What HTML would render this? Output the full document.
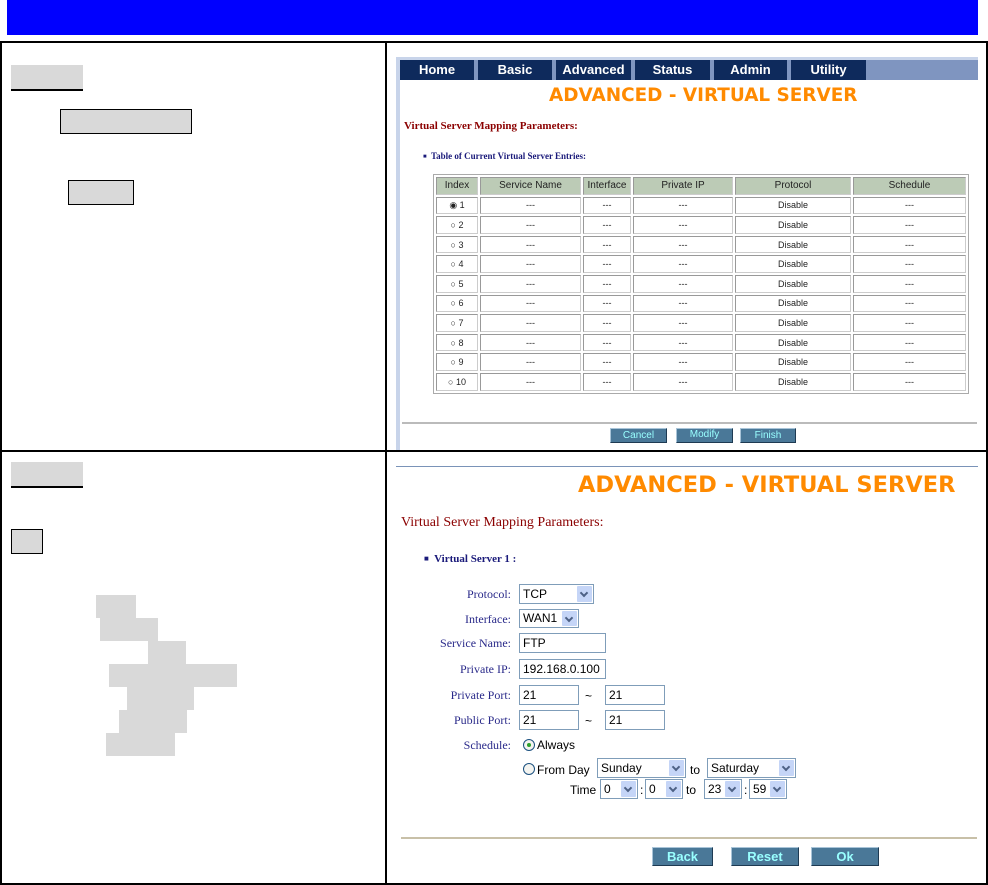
<!DOCTYPE html>
<html><head><meta charset="utf-8">
<style>
*{margin:0;padding:0;box-sizing:border-box}
body{width:988px;height:885px;background:#fff;position:relative;overflow:hidden;font-family:"Liberation Sans",sans-serif}
.a{position:absolute}
.g{position:absolute;background:#d9d9d9}
.gb{position:absolute;background:#d9d9d9;border:1px solid #000}
.nav{position:absolute;top:60px;height:20px;background:#0e2a5c;color:#fff;font:bold 13px "Liberation Sans Narrow","Liberation Sans",sans-serif;text-align:center;line-height:20px}
.ttl{position:absolute;color:#ff8a00;font-weight:bold;font-family:"DejaVu Sans",sans-serif;white-space:nowrap}
.red{position:absolute;color:#8b0000;font-family:"Liberation Serif",serif;white-space:nowrap}
.blu{position:absolute;color:#1a1a7a;font-family:"Liberation Serif",serif;font-weight:bold;white-space:nowrap}
table.t{position:absolute;left:433px;top:174px;width:536px;border-collapse:separate;border-spacing:2px;border:1px solid #aaa;font-size:9px;color:#222}
table.t td{border:1px solid #999;border-right-color:#ccc;border-bottom-color:#ccc;height:17.6px;text-align:center;padding:0}
table.t tr.h td{background:#bccbb6;font-size:10px;color:#222}
.btn{position:absolute;background:#4a7898;color:#9ff;border:1px solid #1e3a52;border-top-color:#a9c4d8;border-left-color:#a9c4d8;text-align:center;font-family:"Liberation Sans Narrow","Liberation Sans",sans-serif}
.lbl{position:absolute;width:120px;text-align:right;left:391px;color:#2a2a8a;font:12px "Liberation Serif",serif}
.in{position:absolute;border:1px solid #7f9db9;background:#fff;font-size:12px;padding-left:3px;color:#000}
.sel{position:absolute;border:1px solid #7f9db9;background:#fff;font-size:12px;padding-left:3px;color:#000}
.sel i{position:absolute;right:1px;top:1px;bottom:1px;width:15px;background:#c5d5f7;border-radius:1px}
.sel i:after{content:"";position:absolute;left:4px;top:4px;width:4px;height:4px;border-right:2px solid #4d6185;border-bottom:2px solid #4d6185;transform:rotate(45deg)}
.rad{position:absolute;width:12px;height:12px;border:1px solid #1c5180;border-radius:50%;background:#f4f4f0}
.tx{position:absolute;font-size:12px;color:#000;white-space:nowrap}
</style></head><body>
<div class="a" style="left:7px;top:0;width:971px;height:35px;background:#0000ff"></div>
<div class="a" style="left:0;top:41px;width:988px;height:2px;background:#000"></div>
<div class="a" style="left:0;top:450px;width:988px;height:2px;background:#000"></div>
<div class="a" style="left:0;top:883px;width:988px;height:2px;background:#000"></div>
<div class="a" style="left:0;top:41px;width:2px;height:844px;background:#000"></div>
<div class="a" style="left:986px;top:41px;width:2px;height:844px;background:#000"></div>
<div class="a" style="left:385px;top:41px;width:2px;height:844px;background:#000"></div>

<div class="g" style="left:11px;top:65px;width:72px;height:24px"></div>
<div class="a" style="left:11px;top:89px;width:72px;height:2px;background:#000"></div>
<div class="gb" style="left:60px;top:109px;width:132px;height:25px"></div>
<div class="gb" style="left:68px;top:180px;width:66px;height:25px"></div>
<div class="g" style="left:11px;top:462px;width:72px;height:24px"></div>
<div class="a" style="left:11px;top:486px;width:72px;height:2px;background:#000"></div>
<div class="gb" style="left:11px;top:529px;width:32px;height:25px"></div>
<div class="g" style="left:96px;top:595px;width:40px;height:23px"></div>
<div class="g" style="left:100px;top:618px;width:58px;height:23px"></div>
<div class="g" style="left:148px;top:641px;width:38px;height:23px"></div>
<div class="g" style="left:109px;top:664px;width:128px;height:23px"></div>
<div class="g" style="left:127px;top:687px;width:67px;height:23px"></div>
<div class="g" style="left:119px;top:710px;width:68px;height:23px"></div>
<div class="g" style="left:106px;top:733px;width:69px;height:23px"></div>

<div class="a" style="left:396px;top:57px;width:582px;height:393px;background:#fff"></div>
<div class="a" style="left:396px;top:57px;width:4px;height:393px;background:#c8d4ea"></div>
<div class="a" style="left:396px;top:57px;width:582px;height:3px;background:#c8d4ea"></div>
<div class="a" style="left:400px;top:60px;width:578px;height:20px;background:#7f95c0"></div>
<div class="nav" style="left:400px;width:74px">Home</div>
<div class="nav" style="left:478px;width:74px">Basic</div>
<div class="nav" style="left:556px;width:75px">Advanced</div>
<div class="nav" style="left:635px;width:75px">Status</div>
<div class="nav" style="left:714px;width:73px">Admin</div>
<div class="nav" style="left:791px;width:75px">Utility</div>
<div class="ttl" style="left:549px;top:85px;font-size:18.4px">ADVANCED - VIRTUAL SERVER</div>
<div class="red" style="left:404px;top:120px;font-size:11px;font-weight:bold">Virtual Server Mapping Parameters:</div>
<div class="blu" style="left:423px;top:151px;font-size:9px"><span style="font-size:6px;vertical-align:1px">■</span>&nbsp; Table of Current Virtual Server Entries:</div>
<table class="t">
<tr class="h"><td style="width:42px">Index</td><td style="width:101px">Service Name</td><td style="width:48px">Interface</td><td style="width:100px">Private IP</td><td style="width:116px">Protocol</td><td>Schedule</td></tr>
<tr><td>◉ 1</td><td>---</td><td>---</td><td>---</td><td>Disable</td><td>---</td></tr>
<tr><td>○ 2</td><td>---</td><td>---</td><td>---</td><td>Disable</td><td>---</td></tr>
<tr><td>○ 3</td><td>---</td><td>---</td><td>---</td><td>Disable</td><td>---</td></tr>
<tr><td>○ 4</td><td>---</td><td>---</td><td>---</td><td>Disable</td><td>---</td></tr>
<tr><td>○ 5</td><td>---</td><td>---</td><td>---</td><td>Disable</td><td>---</td></tr>
<tr><td>○ 6</td><td>---</td><td>---</td><td>---</td><td>Disable</td><td>---</td></tr>
<tr><td>○ 7</td><td>---</td><td>---</td><td>---</td><td>Disable</td><td>---</td></tr>
<tr><td>○ 8</td><td>---</td><td>---</td><td>---</td><td>Disable</td><td>---</td></tr>
<tr><td>○ 9</td><td>---</td><td>---</td><td>---</td><td>Disable</td><td>---</td></tr>
<tr><td>○ 10</td><td>---</td><td>---</td><td>---</td><td>Disable</td><td>---</td></tr>
</table>
<div class="a" style="left:402px;top:422px;width:575px;height:2px;background:#bbb"></div>
<div class="btn" style="left:610px;top:428px;width:57px;height:15px;font-size:10px;line-height:14px">Cancel</div>
<div class="btn" style="left:676px;top:428px;width:57px;height:15px;font-size:10px;line-height:12px">Modify</div>
<div class="btn" style="left:740px;top:428px;width:56px;height:15px;font-size:10px;line-height:14px">Finish</div>

<div class="a" style="left:396px;top:466px;width:582px;height:1px;background:#7a93b8"></div>
<div class="ttl" style="left:578px;top:472px;font-size:22.5px">ADVANCED - VIRTUAL SERVER</div>
<div class="red" style="left:401px;top:515px;font-size:14px">Virtual Server Mapping Parameters:</div>
<div class="blu" style="left:424px;top:553px;font-size:11px"><span style="font-size:8px;vertical-align:1px">■</span>&nbsp; Virtual Server 1 :</div>

<div class="lbl" style="top:587px">Protocol:</div>
<div class="sel" style="left:519px;top:584px;width:75px;height:20px;line-height:18px">TCP<i></i></div>
<div class="lbl" style="top:612px">Interface:</div>
<div class="sel" style="left:519px;top:609px;width:60px;height:19px;line-height:17px">WAN1<i></i></div>
<div class="lbl" style="top:636px">Service Name:</div>
<div class="in" style="left:519px;top:633px;width:87px;height:20px;line-height:18px">FTP</div>
<div class="lbl" style="top:662px">Private IP:</div>
<div class="in" style="left:519px;top:659px;width:87px;height:20px;line-height:18px">192.168.0.100</div>
<div class="lbl" style="top:688px">Private Port:</div>
<div class="in" style="left:519px;top:685px;width:60px;height:20px;line-height:18px">21</div>
<div class="tx" style="left:585px;top:689px">~</div>
<div class="in" style="left:605px;top:685px;width:60px;height:20px;line-height:18px">21</div>
<div class="lbl" style="top:713px">Public Port:</div>
<div class="in" style="left:519px;top:710px;width:60px;height:20px;line-height:18px">21</div>
<div class="tx" style="left:585px;top:714px">~</div>
<div class="in" style="left:605px;top:710px;width:60px;height:20px;line-height:18px">21</div>
<div class="lbl" style="top:738px">Schedule:</div>
<div class="rad" style="left:523px;top:739px"><div style="position:absolute;left:3px;top:3px;width:4px;height:4px;border-radius:50%;background:#2da02d"></div></div>
<div class="tx" style="left:537px;top:738px">Always</div>
<div class="rad" style="left:523px;top:763px"></div>
<div class="tx" style="left:537px;top:763px">From Day</div>
<div class="sel" style="left:597px;top:758px;width:89px;height:20px;line-height:18px">Sunday<i></i></div>
<div class="tx" style="left:690px;top:763px">to</div>
<div class="sel" style="left:707px;top:758px;width:89px;height:20px;line-height:18px">Saturday<i></i></div>
<div class="tx" style="left:570px;top:783px">Time</div>
<div class="sel" style="left:600px;top:779px;width:38px;height:20px;line-height:18px">0<i></i></div>
<div class="tx" style="left:640px;top:783px">:</div>
<div class="sel" style="left:645px;top:779px;width:38px;height:20px;line-height:18px">0<i></i></div>
<div class="tx" style="left:686px;top:783px">to</div>
<div class="sel" style="left:704px;top:779px;width:38px;height:20px;line-height:18px">23<i></i></div>
<div class="tx" style="left:744px;top:783px">:</div>
<div class="sel" style="left:749px;top:779px;width:38px;height:20px;line-height:18px">59<i></i></div>

<div class="a" style="left:401px;top:837px;width:576px;height:2px;background:#c8c0a8"></div>
<div class="btn" style="left:652px;top:847px;width:61px;height:19px;font-size:13px;font-weight:bold;line-height:18px">Back</div>
<div class="btn" style="left:731px;top:847px;width:68px;height:19px;font-size:13px;font-weight:bold;line-height:18px">Reset</div>
<div class="btn" style="left:811px;top:847px;width:68px;height:19px;font-size:13px;font-weight:bold;line-height:18px">Ok</div>
</body></html>
